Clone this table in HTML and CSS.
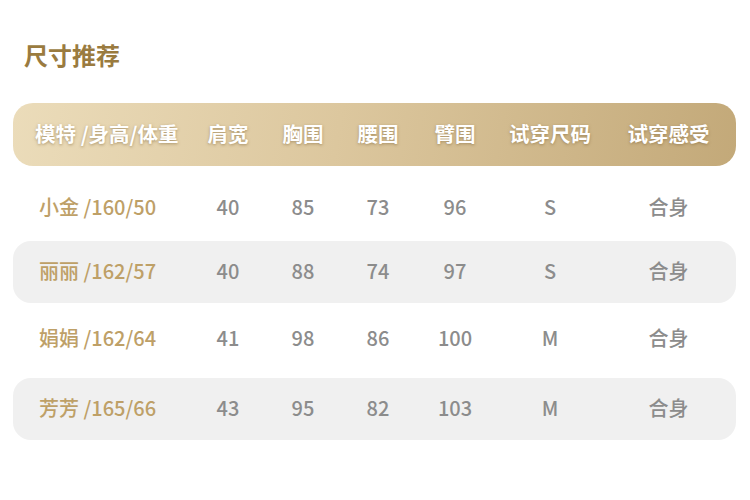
FILE: index.html
```html
<!DOCTYPE html>
<html lang="zh">
<head>
<meta charset="utf-8">
<link rel="stylesheet" href="styles.css">
</head>
<body>
<div class="page">
  <h1 class="title">尺寸推荐</h1>
  <div class="table">
    <div class="row head">
      <div class="c name">模特 /身高/体重</div>
      <div class="c">肩宽</div>
      <div class="c">胸围</div>
      <div class="c">腰围</div>
      <div class="c">臂围</div>
      <div class="c">试穿尺码</div>
      <div class="c last">试穿感受</div>
    </div>
    <div class="row r1">
      <div class="c name">小金 /160/50</div>
      <div class="c">40</div><div class="c">85</div><div class="c">73</div><div class="c">96</div><div class="c">S</div><div class="c last">合身</div>
    </div>
    <div class="row alt r2">
      <div class="c name">丽丽 /162/57</div>
      <div class="c">40</div><div class="c">88</div><div class="c">74</div><div class="c">97</div><div class="c">S</div><div class="c last">合身</div>
    </div>
    <div class="row r3">
      <div class="c name">娟娟 /162/64</div>
      <div class="c">41</div><div class="c">98</div><div class="c">86</div><div class="c">100</div><div class="c">M</div><div class="c last">合身</div>
    </div>
    <div class="row alt r4">
      <div class="c name">芳芳 /165/66</div>
      <div class="c">43</div><div class="c">95</div><div class="c">82</div><div class="c">103</div><div class="c">M</div><div class="c last">合身</div>
    </div>
  </div>
</div>
</body>
</html>
```
FILE: styles.css
```css
html, body {
  margin: 0;
  padding: 0;
  background: #ffffff;
}
body {
  font-family: "Noto Sans CJK SC", "Noto Sans", sans-serif;
  width: 750px;
  height: 500px;
  overflow: hidden;
}
.page {
  padding: 40px 14px 0 13px;
}
.title {
  margin: 0 0 0 11px;
  font-size: 24px;
  line-height: 30px;
  font-weight: 700;
  color: #9a7b3f;
}
.table {
  margin-top: 33px;
  display: flex;
  flex-direction: column;
}
.row {
  display: grid;
  grid-template-columns: 188px 54px 96px 54px 100px 90px 1fr;
  align-items: center;
  box-sizing: border-box;
  height: 62px;
  padding-bottom: 3px;
  border-radius: 18px;
  font-size: 20px;
  font-weight: 500;
  color: #8c8c8c;
}
.row.head {
  height: 63px;
  border-radius: 20px;
  background: linear-gradient(100deg, #ebdcba 0%, #dcc79e 45%, #c3a979 100%);
  color: #ffffff;
  font-weight: 700;
  font-size: 20.5px;
  text-shadow: 0 1px 3px rgba(120, 95, 50, 0.55);
}
.row.r1 { margin-top: 11px; }
.row.r2 { margin-top: 2px; }
.row.r3 { margin-top: 5px; }
.row.r4 { margin-top: 8px; }
.row.alt {
  background: #f0f0f0;
}
.c {
  text-align: center;
  white-space: nowrap;
}
.c.last {
  padding-left: 6px;
}
.c.name {
  text-align: left;
  padding-left: 26px;
  color: #bea067;
}
.head .c.name {
  padding-left: 22px;
  color: #ffffff;
}
```
